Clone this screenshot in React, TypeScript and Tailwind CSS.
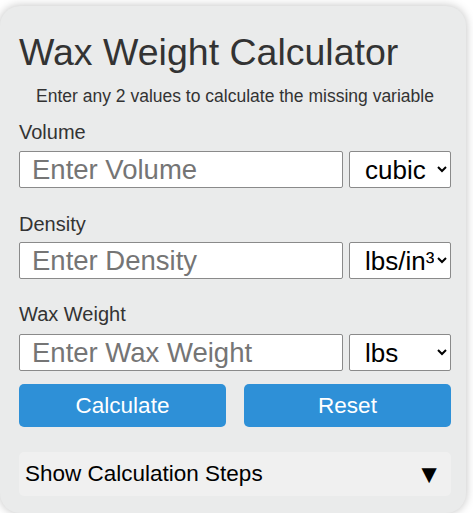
import { useState } from "react";

interface Field {
  id: string;
  label: string;
  placeholder: string;
  units: string[];
}

const FIELDS: Field[] = [
  { id: "volume", label: "Volume", placeholder: "Enter Volume", units: ["cubic in", "cubic cm", "liters"] },
  { id: "density", label: "Density", placeholder: "Enter Density", units: ["lbs/in³", "g/cm³", "kg/m³"] },
  { id: "weight", label: "Wax Weight", placeholder: "Enter Wax Weight", units: ["lbs", "kg", "g", "oz"] },
];

// spacing above each label, measured off the reference
const LABEL_GAP = ["mt-[15px]", "mt-[25px]", "mt-[24px]"];
const INPUT_GAP = ["mt-[8px]", "mt-[7px]", "mt-[9px]"];

const App = () => {
  const [values, setValues] = useState<Record<string, string>>({});
  const [open, setOpen] = useState(false);

  return (
    <div className="font-['Liberation_Sans',Arial,sans-serif] pt-[6px]">
      <div className="flex w-[466px] flex-col rounded-[20px] bg-[#eaebeb] pb-[17px] pl-[19px] pr-[15px] pt-[25px] shadow-[0_0_10px_rgba(0,0,0,0.25)]">
        <h1 className="text-[37.5px] leading-[42px] font-normal text-[#333]">Wax Weight Calculator</h1>
        <p className="mt-[13px] text-center text-[17.5px] leading-[20px] text-[#333]">
          Enter any 2 values to calculate the missing variable
        </p>

        {FIELDS.map((field, i) => (
          <div key={field.id} className="flex flex-col">
            <label htmlFor={field.id} className={`${LABEL_GAP[i]} text-[20px] leading-[22px] text-[#333]`}>
              {field.label}
            </label>
            <div className={`${INPUT_GAP[i]} flex gap-[6px]`}>
              <input
                id={field.id}
                type="text"
                value={values[field.id] ?? ""}
                onChange={(e) => setValues((prev) => ({ ...prev, [field.id]: e.target.value }))}
                placeholder={field.placeholder}
                className="h-[37px] w-[324px] rounded-[2px] border border-[#8a8a8a] bg-white px-[12px] text-[27.5px] text-black outline-none placeholder:text-[#757575]"
              />
              <select className="h-[37px] w-[102px] rounded-[2px] border border-[#8a8a8a] bg-white pl-[11px] text-[26px] text-black">
                {field.units.map((u) => (
                  <option key={u}>{u}</option>
                ))}
              </select>
            </div>
          </div>
        ))}

        <div className="mt-[13px] flex gap-[18px]">
          <button
            type="button"
            className="h-[43px] flex-1 rounded-[5px] bg-[#2e90d7] text-[22.5px] text-white"
          >
            Calculate
          </button>
          <button
            type="button"
            onClick={() => setValues({})}
            className="h-[43px] flex-1 rounded-[5px] bg-[#2e90d7] text-[22.5px] text-white"
          >
            Reset
          </button>
        </div>

        <button
          type="button"
          onClick={() => setOpen((o) => !o)}
          className="mt-[25px] flex h-[44px] items-center justify-between rounded-[5px] bg-[#f0f0f0] pl-[6px] pr-[9px] text-[22.5px] text-black"
        >
          <span>Show Calculation Steps</span>
          <span className="text-[26px] leading-none">{open ? "▲" : "▼"}</span>
        </button>
      </div>
    </div>
  );
};

export default App;
